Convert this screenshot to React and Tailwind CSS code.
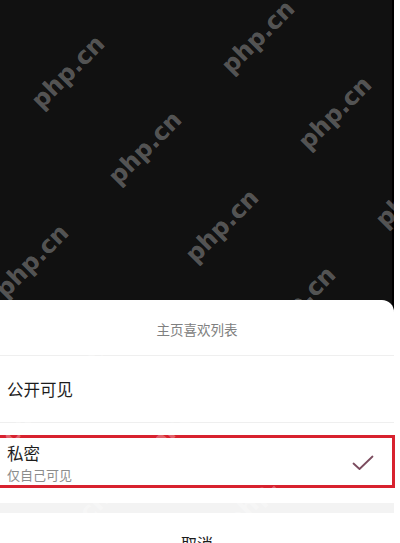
import { useState } from 'react'

// watermark centres, repeated across the screen on a diagonal grid
const marks = [
  [68, 72], [145, 148], [222, 226], [299, 303], [376, 380],
  [258, 37], [335, 113], [412, 191],
  [32, 261], [109, 338], [186, 415], [263, 492],
  [-4, 450], [73, 527],
]

const options = [
  { key: 'public', label: '公开可见' },
  { key: 'private', label: '私密', hint: '仅自己可见' },
]

const CheckIcon = () => (
  <svg width="22" height="16" viewBox="0 0 22 16" fill="none">
    <path d="M1.5 8.5 L7.5 14 L20.5 1.5" stroke="#7b4b5e" strokeWidth="1.8" strokeLinecap="round" strokeLinejoin="round" />
  </svg>
)

const App = () => {
  const [selected, setSelected] = useState('private')

  return (
    <div className="relative w-[400px] h-[543px] overflow-hidden bg-white font-['Noto_Sans_CJK_SC','Noto_Sans',sans-serif]">
      {/* video area behind the sheet */}
      <div className="w-[394px] h-[312px] bg-[#111111] border-r-2 border-black" />

      {/* bottom sheet */}
      <div className="relative -mt-3 w-[394px] bg-white rounded-tr-xl">
        <div className="h-[55px] flex items-center justify-center pt-1 text-[13.5px] text-[#808080]">主页喜欢列表</div>
        <div className="h-px bg-[#efefef]" />

        {options.map(opt => (
          <div key={opt.key}>
            <div
              onClick={() => setSelected(opt.key)}
              className={`relative flex items-center justify-between pl-[7px] pr-[20px] ${opt.hint ? 'h-[80px]' : 'h-[66px]'}`}
            >
              <div className="flex flex-col">
                <span className="text-[16.5px] leading-[22px] text-[#1c1c1c]">{opt.label}</span>
                {opt.hint && <span className="mt-[1px] text-[13px] leading-[19px] text-[#8c8c8c]">{opt.hint}</span>}
              </div>
              {selected === opt.key && <CheckIcon />}
              {opt.hint && (
                <div className="absolute left-[-4px] right-[-1px] top-[12px] h-[53px] border-[3px] border-[#d8222f]" />
              )}
            </div>
            {!opt.hint && <div className="h-px bg-[#efefef]" />}
          </div>
        ))}

        <div className="h-[10px] bg-[#f3f3f3]" />
        <div className="h-[60px] flex items-center justify-center text-[16px] text-[#1c1c1c]">取消</div>
      </div>

      {/* php.cn watermark overlay */}
      {marks.map(([x, y], i) => (
        <span
          key={i}
          style={{ left: x, top: y }}
          className="absolute -translate-x-1/2 -translate-y-1/2 -rotate-45 whitespace-nowrap font-['DejaVu_Sans',sans-serif] font-bold text-[24px] text-white/30 pointer-events-none"
        >
          php.cn
        </span>
      ))}
    </div>
  )
}

export default App
